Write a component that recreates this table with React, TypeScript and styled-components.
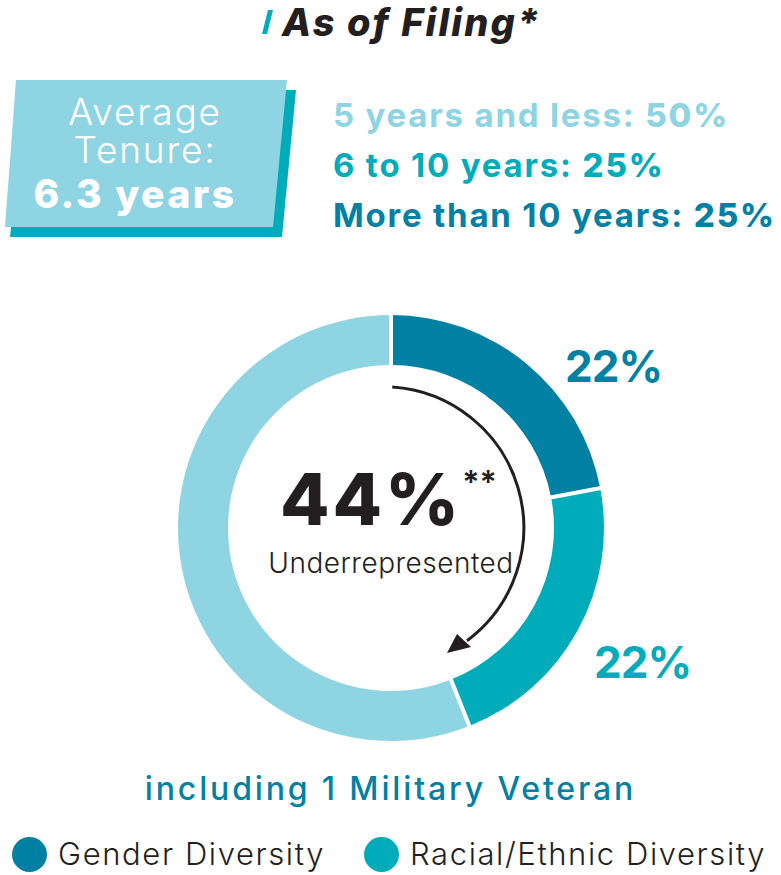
import React from "react";
import styled, { createGlobalStyle } from "styled-components";

const LIGHT = "#8fd4e2";
const TEAL = "#00acba";
const DARK = "#0080a3";
const INK = "#231f20";

const Global = createGlobalStyle`
  html, body { margin: 0; padding: 0; background: #fff; }
  body { font-family: "Inter", "Liberation Sans", sans-serif; }
`;

const Page = styled.div`
  width: 781px;
  height: 875px;
  display: flex;
  flex-direction: column;
  align-items: center;
  overflow: hidden;
`;

const Title = styled.h1`
  margin: -1px 0 0 25px;
  height: 46px;
  line-height: 46px;
  display: flex;
  align-items: center;
  gap: 12px;
  font-size: 38px;
  font-weight: 800;
  font-style: italic;
  color: ${INK};
  letter-spacing: 2.1px;
  white-space: nowrap;
`;

const Slash = styled.span`
  display: inline-block;
  width: 5px;
  height: 24px;
  margin-top: 0px;
  background: ${TEAL};
  transform: skewX(-14deg);
`;

const TopRow = styled.div`
  width: 781px;
  height: 200px;
  margin-top: 35px;
  display: flex;
  align-items: flex-start;
`;

const BoxWrap = styled.div`
  position: relative;
  width: 298px;
  height: 160px;
  margin-left: 3px;
  flex-shrink: 0;
`;

const BoxShadow = styled.div`
  position: absolute;
  inset: 0;
  background: ${TEAL};
  clip-path: polygon(23px 10px, 293px 10px, 279px 157px, 7px 157px);
`;

const BoxFace = styled.div`
  position: absolute;
  inset: 0;
  background: ${LIGHT};
  clip-path: polygon(13px 0px, 284px 0px, 270px 147px, 2px 147px);
  display: flex;
  flex-direction: column;
  align-items: center;
  padding-top: 13px;
  padding-right: 14px;
  box-sizing: border-box;
  color: #fff;
`;

const BoxLabel = styled.div`
  font-size: 37px;
  font-weight: 300;
  line-height: 38px;
  letter-spacing: 1.8px;
  text-align: center;
  white-space: nowrap;
`;

const BoxValue = styled.div`
  font-size: 39px;
  font-weight: 800;
  line-height: 48px;
  letter-spacing: 2.5px;
  margin-left: -20px;
  margin-top: 1px;
  white-space: nowrap;
`;

const List = styled.div`
  display: flex;
  flex-direction: column;
  margin-left: 32px;
  padding-top: 10px;
`;

const ListItem = styled.div<{ $color: string }>`
  font-size: 33px;
  font-weight: 700;
  line-height: 50px;
  color: ${(p) => p.$color};
  white-space: nowrap;
  letter-spacing: 1.8px;
  b { font-weight: 800; }
`;

const ChartArea = styled.div`
  position: relative;
  width: 781px;
  height: 445px;
  margin-top: 35px;
  flex-shrink: 0;
`;

const ChartSvg = styled.svg`
  display: block;
`;

const Pct = styled.div<{ $color: string; $x: number; $y: number }>`
  position: absolute;
  left: ${(p) => p.$x}px;
  top: ${(p) => p.$y}px;
  font-size: 44px;
  font-weight: 700;
  color: ${(p) => p.$color};
  line-height: 44px;
  letter-spacing: -1px;
`;

const Center = styled.div`
  position: absolute;
  left: 231px;
  width: 320px;
  top: 148px;
  display: flex;
  flex-direction: column;
  align-items: center;
  color: ${INK};
`;

const Big = styled.div`
  font-size: 72px;
  font-weight: 800;
  line-height: 72px;
  letter-spacing: 3px;
  position: relative;
  margin-left: -40px;
`;

const Sup = styled.span`
  position: absolute;
  left: 100%;
  top: 4px;
  font-size: 32px;
  font-weight: 600;
  line-height: 32px;
  letter-spacing: 0px;
`;

const Under = styled.div`
  font-size: 28px;
  font-weight: 300;
  line-height: 32px;
  margin-top: 12px;
  letter-spacing: 0.5px;
`;

const Veteran = styled.div`
  margin-top: 9px;
  font-size: 32px;
  font-weight: 500;
  color: ${DARK};
  letter-spacing: 2.85px;
  line-height: 40px;
  white-space: nowrap;
`;

const Legend = styled.div`
  width: 781px;
  display: flex;
  align-items: center;
  margin-top: 26px;
  padding-left: 12px;
  box-sizing: border-box;
`;

const LegendItem = styled.div`
  display: flex;
  align-items: center;
  gap: 11px;
  margin-right: 39px;
`;

const Dot = styled.span<{ $color: string }>`
  width: 35px;
  height: 35px;
  margin-top: 2px;
  border-radius: 50%;
  background: ${(p) => p.$color};
  flex-shrink: 0;
`;

const LegendText = styled.span`
  font-size: 31px;
  font-weight: 300;
  line-height: 36px;
  color: ${INK};
  letter-spacing: 1.6px;
  white-space: nowrap;
`;

const CX = 391;
const CY = 213;
const RO = 213;
const RI = 163;

function pt(r: number, deg: number) {
  const a = ((deg - 90) * Math.PI) / 180;
  return [CX + r * Math.cos(a), CY + r * Math.sin(a)];
}

function seg(a0: number, a1: number) {
  const [x0, y0] = pt(RO, a0);
  const [x1, y1] = pt(RO, a1);
  const [x2, y2] = pt(RI, a1);
  const [x3, y3] = pt(RI, a0);
  const large = a1 - a0 > 180 ? 1 : 0;
  return `M${x0} ${y0} A${RO} ${RO} 0 ${large} 1 ${x1} ${y1} L${x2} ${y2} A${RI} ${RI} 0 ${large} 0 ${x3} ${y3} Z`;
}

function Gap({ deg }: { deg: number }) {
  const [x0, y0] = pt(RI - 2, deg);
  const [x1, y1] = pt(RO + 2, deg);
  return <line x1={x0} y1={y0} x2={x1} y2={y1} stroke="#fff" strokeWidth={4} />;
}

function arrowArc() {
  const r = 141;
  const [x0, y0] = pt(r, 0.5);
  const [x1, y1] = pt(r - 5, 146);
  return `M${x0} ${y0} A${r} ${r} 0 0 1 ${x1} ${y1}`;
}

export default function App() {
  const a1 = 79.2;
  const a2 = 158.4;
  return (
    <>
      <Global />
      <Page>
        <Title>
          <Slash />
          As of Filing*
        </Title>
        <TopRow>
          <BoxWrap>
            <BoxShadow />
            <BoxFace>
              <BoxLabel>
                Average
                <br />
                Tenure:
              </BoxLabel>
              <BoxValue>6.3 years</BoxValue>
            </BoxFace>
          </BoxWrap>
          <List>
            <ListItem $color={LIGHT}>
              5 years and less: <b>50%</b>
            </ListItem>
            <ListItem $color={TEAL}>
              6 to 10 years: <b>25%</b>
            </ListItem>
            <ListItem $color={DARK}>
              More than 10 years: <b>25%</b>
            </ListItem>
          </List>
        </TopRow>
        <ChartArea>
          <ChartSvg width={781} height={445} viewBox="0 0 781 445">
            <path d={seg(0, a1)} fill={DARK} />
            <path d={seg(a1, a2)} fill={TEAL} />
            <path d={seg(a2, 360)} fill={LIGHT} />
            <Gap deg={0} />
            <Gap deg={a1} />
            <Gap deg={a2} />
            <path d={arrowArc()} fill="none" stroke={INK} strokeWidth={3} />
            <polygon points="447,338 457,319 471,332" fill={INK} />
          </ChartSvg>
          <Pct $color={DARK} $x={565} $y={29}>
            22%
          </Pct>
          <Pct $color={TEAL} $x={594} $y={325}>
            22%
          </Pct>
          <Center>
            <Big>
              44%<Sup>**</Sup>
            </Big>
            <Under>Underrepresented</Under>
          </Center>
        </ChartArea>
        <Veteran>including 1 Military Veteran</Veteran>
        <Legend>
          <LegendItem>
            <Dot $color={DARK} />
            <LegendText>Gender Diversity</LegendText>
          </LegendItem>
          <LegendItem>
            <Dot $color={TEAL} />
            <LegendText>Racial/Ethnic Diversity</LegendText>
          </LegendItem>
        </Legend>
      </Page>
    </>
  );
}
